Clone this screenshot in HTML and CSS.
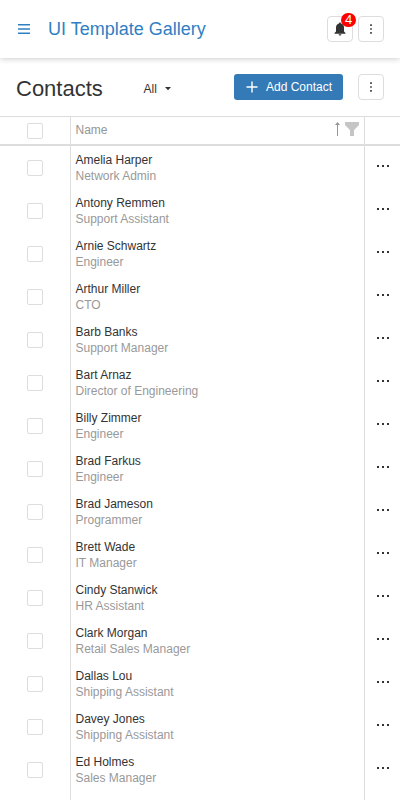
FILE: index.html
```html
<!DOCTYPE html>
<html lang="en">
<head>
<meta charset="utf-8">
<title>Contacts</title>
<link rel="stylesheet" href="styles.css">
</head>
<body>
<header class="app-header">
  <svg class="menu" width="16" height="16" viewBox="0 0 16 16"><path d="M2 3.700h12M2 8h12M2 12.300h12" stroke="#2f80c3" stroke-width="1.400"/></svg>
  <h1 class="brand">UI Template Gallery</h1>
  <button class="icon-btn bell">
    <svg width="12" height="14" viewBox="0 0 12 14"><path fill="#333" d="M6 .5c.7 0 1 .5 1 1.100C9 2.100 10 3.700 10 5.500v4l1.500 1.500v.7H.5V11L2 9.500v-4C2 3.700 3 2.100 5 1.600 5 1 5.300.5 6 .5zM4.600 12.300h2.800c0 .8-.6 1.300-1.400 1.300s-1.400-.5-1.400-1.300z"/></svg>
    <span class="badge">4</span>
  </button>
  <button class="icon-btn"><svg width="2" height="10" viewBox="0 0 2 10" fill="#333"><path d="M.2.3h1.600v1.600H.2zM.2 4.200h1.600v1.600H.2zM.2 8.100h1.600v1.600H.2z"/></svg></button>
</header>
<section class="toolbar">
  <h2 class="title">Contacts</h2>
  <div class="filter"><span>All</span><svg width="6" height="4" viewBox="0 0 6 4"><path d="M0 0h6L3 3.300z" fill="#333"/></svg></div>
  <button class="add"><svg width="12" height="12" viewBox="0 0 12 12"><path d="M6 .5v11M.5 6h11" stroke="#fff" stroke-width="1.400"/></svg><span>Add Contact</span></button>
  <button class="icon-btn"><svg width="2" height="10" viewBox="0 0 2 10" fill="#333"><path d="M.2.3h1.600v1.600H.2zM.2 4.200h1.600v1.600H.2zM.2 8.100h1.600v1.600H.2z"/></svg></button>
</section>
<main class="grid">
  <div class="row head">
    <div class="select"><i class="check"></i></div>
    <div class="name"><span>Name</span>
      <svg class="sort" width="5" height="14" viewBox="0 0 5 14"><path d="M2.500 1v13" stroke="#959595"/><path d="M2.500 0L5 3H0z" fill="#959595"/></svg>
      <svg width="14" height="14" viewBox="0 0 14 14"><path d="M0 0h14v3L9 8v6H5V8L0 3z" fill="#c5c5c5"/></svg>
    </div>
    <div class="actions"></div>
  </div>
  <div class="row"><div class="select"><i class="check"></i></div><div class="cell"><b>Amelia Harper</b><small>Network Admin</small></div><div class="actions"><i class="dots"></i></div></div>
  <div class="row"><div class="select"><i class="check"></i></div><div class="cell"><b>Antony Remmen</b><small>Support Assistant</small></div><div class="actions"><i class="dots"></i></div></div>
  <div class="row"><div class="select"><i class="check"></i></div><div class="cell"><b>Arnie Schwartz</b><small>Engineer</small></div><div class="actions"><i class="dots"></i></div></div>
  <div class="row"><div class="select"><i class="check"></i></div><div class="cell"><b>Arthur Miller</b><small>CTO</small></div><div class="actions"><i class="dots"></i></div></div>
  <div class="row"><div class="select"><i class="check"></i></div><div class="cell"><b>Barb Banks</b><small>Support Manager</small></div><div class="actions"><i class="dots"></i></div></div>
  <div class="row"><div class="select"><i class="check"></i></div><div class="cell"><b>Bart Arnaz</b><small>Director of Engineering</small></div><div class="actions"><i class="dots"></i></div></div>
  <div class="row"><div class="select"><i class="check"></i></div><div class="cell"><b>Billy Zimmer</b><small>Engineer</small></div><div class="actions"><i class="dots"></i></div></div>
  <div class="row"><div class="select"><i class="check"></i></div><div class="cell"><b>Brad Farkus</b><small>Engineer</small></div><div class="actions"><i class="dots"></i></div></div>
  <div class="row"><div class="select"><i class="check"></i></div><div class="cell"><b>Brad Jameson</b><small>Programmer</small></div><div class="actions"><i class="dots"></i></div></div>
  <div class="row"><div class="select"><i class="check"></i></div><div class="cell"><b>Brett Wade</b><small>IT Manager</small></div><div class="actions"><i class="dots"></i></div></div>
  <div class="row"><div class="select"><i class="check"></i></div><div class="cell"><b>Cindy Stanwick</b><small>HR Assistant</small></div><div class="actions"><i class="dots"></i></div></div>
  <div class="row"><div class="select"><i class="check"></i></div><div class="cell"><b>Clark Morgan</b><small>Retail Sales Manager</small></div><div class="actions"><i class="dots"></i></div></div>
  <div class="row"><div class="select"><i class="check"></i></div><div class="cell"><b>Dallas Lou</b><small>Shipping Assistant</small></div><div class="actions"><i class="dots"></i></div></div>
  <div class="row"><div class="select"><i class="check"></i></div><div class="cell"><b>Davey Jones</b><small>Shipping Assistant</small></div><div class="actions"><i class="dots"></i></div></div>
  <div class="row"><div class="select"><i class="check"></i></div><div class="cell"><b>Ed Holmes</b><small>Sales Manager</small></div><div class="actions"><i class="dots"></i></div></div>
  <div class="row"><div class="select"></div><div class="cell"></div><div class="actions"></div></div>
</main>
</body>
</html>
```
FILE: styles.css
```css
* { box-sizing: border-box; }
body {
  margin: 0;
  height: 800px;
  overflow: hidden;
  display: flex;
  flex-direction: column;
  background: #fff;
  color: #333;
  font: 12px/16px "Liberation Sans", Arial, sans-serif;
}
svg { display: block; flex: none; }
h1, h2 { margin: 0; font-weight: 400; }
button { font: inherit; cursor: pointer; }
.app-header {
  position: relative;
  flex: none;
  height: 58px;
  padding: 0 16px;
  display: flex;
  align-items: center;
  background: #fff;
  box-shadow: 0 1px 6px rgba(0, 0, 0, .2);
}
.menu { margin-bottom: 1px; }
.brand { flex: 1; margin-left: 16px; font-size: 18px; line-height: 24px; color: #2f80c3; }
.icon-btn {
  position: relative;
  flex: none;
  width: 26px;
  height: 26px;
  padding: 0;
  display: flex;
  align-items: center;
  justify-content: center;
  border: 1px solid #ddd;
  border-radius: 4px;
  background: #fff;
}
.bell { margin-right: 5px; }
.bell svg { margin-bottom: 1px; }
.badge {
  position: absolute;
  top: -4px;
  right: -4px;
  width: 15px;
  height: 14px;
  border-radius: 7px;
  background: #f00;
  color: #fff;
  font-size: 13px;
  line-height: 14px;
  text-align: center;
}
.toolbar {
  flex: none;
  height: 58px;
  padding: 0 16px;
  display: flex;
  align-items: center;
}
.title { width: 127.500px; font-size: 22px; line-height: 30px; padding-top: 3px; }
.filter { display: flex; align-items: center; gap: 8px; padding-top: 3px; }
.add {
  height: 26px;
  width: 109px;
  margin-left: auto;
  margin-right: 15px;
  padding: 0 0 0 12px;
  display: flex;
  align-items: center;
  gap: 8px;
  border: 0;
  border-radius: 3px;
  background: #337ab7;
  color: #fff;
  white-space: nowrap;
}
.grid { flex: 1; min-height: 0; overflow: hidden; border-top: 1px solid #ddd; }
.row { display: grid; grid-template-columns: 70px 295px 35px; height: 43px; }
.head { height: 29px; border-bottom: 2px solid #ddd; color: #959595; }
.select { display: flex; align-items: center; justify-content: center; padding-top: 1px; }
.check { width: 16px; height: 16px; border: 1px solid #ddd; border-radius: 2px; }
.name, .cell { border: solid #ddd; border-width: 0 1px; padding-left: 4.500px; }
.name { display: flex; align-items: flex-start; padding: 5px 5px 0 4.500px; }
.name span { flex: 1; }
.sort { margin-right: 5px; }
.cell { padding-top: 6px; }
.cell b, .cell small { display: block; font-size: 12px; font-weight: 400; line-height: 16px; }
.cell small { color: #999; }
.actions { display: flex; padding: 19px 0 0 12px; }
.dots {
  width: 12px;
  height: 2px;
  background: repeating-linear-gradient(90deg, #333 0 2px, transparent 2px 5px);
}
```
